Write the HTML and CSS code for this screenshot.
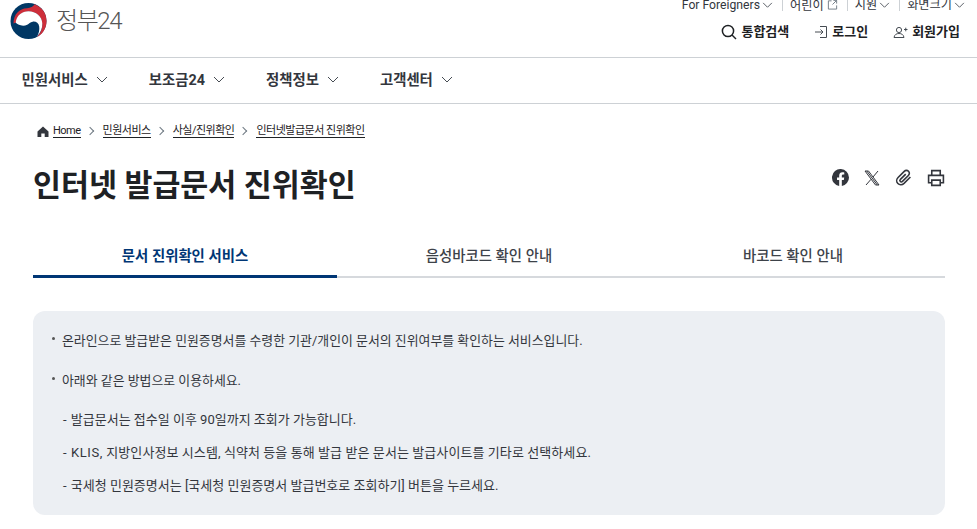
FILE: index.html
```html
<!DOCTYPE html>
<html lang="ko">

<head>
    <meta charset="UTF-8" />
    <meta name="viewport" content="width=device-width, initial-scale=1.0" />
    <title>인터넷 발급문서 진위확인</title>
    <link rel="stylesheet" href="styles.css">
</head>

<body>
    <header class="top-header">
        <a class="logo">
            <svg class="logo-mark" viewBox="0 0 38 36" width="38" height="36">
                <circle cx="18.500" cy="18" r="18" />
                <path class="logo-red" d="M3.500 20.500C3.500 11 9.500 5.500 17 5.200c3.500-.1 6.500-1.500 7.500-3.900C32 4 36.500 10.500 36.500 18c0 7-3.500 12.800-9.500 16 3.500-3.500 5.600-8.500 5.200-13.500C31.700 13 26 8.500 18.500 8.500c-6.500 0-11.500 4.500-12.500 11z" />
                <path class="logo-white" d="M5.700 19.500C6.500 12.500 12 8.300 18.500 8.300c7.500 0 13.500 5 13.800 12.200.2 4.500-1.700 9.300-5.300 13 1.800-3 2.700-6.500 2.200-10-.5-3.500-3.500-5.300-6.500-4.800-2.500.4-3.700 2.100-5.500 3-2 1-4.200 1.300-6.500.6-2.500-.7-4.500-1.900-5-2.800z" />
            </svg>
            <span class="logo-text">정부24</span>
        </a>
        <div class="header-right">
            <ul class="util-menu">
                <li>For Foreigners <svg class="chev" viewBox="0 0 12 8" width="11" height="7"><path d="M1 1l5 5 5-5" /></svg></li>
                <li>어린이 <svg class="ext" viewBox="0 0 12 12" width="11" height="11"><path d="M5 2H1.500v9h9V7M7 1.500h3.500V5M10.500 1.500L6 6" /></svg></li>
                <li>지원 <svg class="chev" viewBox="0 0 12 8" width="11" height="7"><path d="M1 1l5 5 5-5" /></svg></li>
                <li>화면크기 <svg class="chev" viewBox="0 0 12 8" width="11" height="7"><path d="M1 1l5 5 5-5" /></svg></li>
            </ul>
            <div class="user-menu">
                <a><svg viewBox="0 0 16 16" width="16" height="16"><circle cx="7" cy="7" r="5.600" /><path d="M11 11l4 4" /></svg>통합검색</a>
                <a><svg class="thin" viewBox="0 0 14 14" width="14" height="14"><path d="M6 1.500h6.500v11H6M1 7h8M6.500 4.500L9 7l-2.500 2.500" /></svg>로그인</a>
                <a><svg class="thin" viewBox="0 0 15 13" width="15" height="13"><circle cx="6" cy="4" r="2.600" /><path d="M1 11.500c.5-3 2.500-4 5-4s4.500 1 5 4zM11 3.500h3.500M12.750 1.700v3.600" /></svg>회원가입</a>
            </div>
        </div>
    </header>

    <nav class="main-nav">
        <a>민원서비스 <svg class="chev" viewBox="0 0 12 8" width="12" height="8"><path d="M1 1l5 5 5-5" /></svg></a>
        <a>보조금24 <svg class="chev" viewBox="0 0 12 8" width="12" height="8"><path d="M1 1l5 5 5-5" /></svg></a>
        <a>정책정보 <svg class="chev" viewBox="0 0 12 8" width="12" height="8"><path d="M1 1l5 5 5-5" /></svg></a>
        <a>고객센터 <svg class="chev" viewBox="0 0 12 8" width="12" height="8"><path d="M1 1l5 5 5-5" /></svg></a>
    </nav>

    <main class="content">
        <ol class="breadcrumb">
            <li>
                <svg class="home" viewBox="0 0 12 11" width="12" height="11"><path d="M6 .5L.5 5.500V11h3.800V7.500h3.400V11h3.800V5.500z" /></svg>
                <a>Home</a>
            </li>
            <li><a>민원서비스</a></li>
            <li><a>사실/진위확인</a></li>
            <li><a>인터넷발급문서 진위확인</a></li>
        </ol>

        <div class="title-row">
            <h1>인터넷 발급문서 진위확인</h1>
            <div class="share-icons">
                <svg viewBox="0 0 16 16" width="17" height="17"><path class="solid" d="M16 8a8 8 0 1 0-9.250 7.900v-5.600H4.700V8h2.050V6.240c0-2 1.200-3.120 3-3.120.9 0 1.800.16 1.800.16v2h-1c-1 0-1.300.62-1.300 1.250V8h2.240l-.36 2.300H9.250v5.600A8 8 0 0 0 16 8z" /></svg>
                <svg viewBox="0 0 16 16" width="16" height="16"><path class="line" d="M1 1h3.500l10.500 14h-3.500zM2.800 1l10.500 14M14 1L9 7M7 9.300L2 15" /></svg>
                <svg viewBox="0 0 16 16" width="17" height="17"><path class="line wide" d="M14.500 7.500l-6 6c-1.800 1.700-4.300 1.700-5.800.2-1.500-1.500-1.500-4 .2-5.700l5.800-5.800c1.200-1.200 2.900-1.200 4-.1 1.100 1.100 1.100 2.800-.1 4l-5.600 5.600c-.6.600-1.500.6-2 .1s-.5-1.400.1-2l5-5" /></svg>
                <svg viewBox="0 0 17 17" width="18" height="18"><path class="line wide" d="M4.500 6V1.500h8V6M4.500 13H1.500V6h14v7h-3M4.500 10.500h8v5h-8z" /></svg>
            </div>
        </div>

        <div class="tabs">
            <a class="tab active">문서 진위확인 서비스</a>
            <a class="tab">음성바코드 확인 안내</a>
            <a class="tab">바코드 확인 안내</a>
        </div>

        <section class="info-box">
            <p class="bullet">온라인으로 발급받은 민원증명서를 수령한 기관/개인이 문서의 진위여부를 확인하는 서비스입니다.</p>
            <p class="bullet">아래와 같은 방법으로 이용하세요.</p>
            <ul class="dash-list">
                <li>발급문서는 접수일 이후 90일까지 조회가 가능합니다.</li>
                <li class="spaced"><span class="latin">KLIS,</span> 지방인사정보 시스템, 식약처 등을 통해 발급 받은 문서는 발급사이트를 기타로 선택하세요.</li>
                <li>국세청 민원증명서는 [국세청 민원증명서 발급번호로 조회하기] 버튼을 누르세요.</li>
            </ul>
        </section>
    </main>
</body>

</html>
```

FILE: styles.css
```css
* {
    box-sizing: border-box;
}

body {
    margin: 0;
    font-family: Roboto, "Noto Sans CJK KR", sans-serif;
    color: #1e2124;
    background-color: white;
    overflow: hidden;
}

ul,
ol {
    list-style: none;
    margin: 0;
    padding: 0;
}

svg path,
svg circle {
    fill: none;
    stroke: currentColor;
}

.top-header {
    height: 58px;
    border-bottom: 1px solid #cdd1d5;
    display: flex;
    justify-content: space-between;
    padding: 0 17px 0 10px;
}

.logo {
    display: flex;
    align-items: flex-start;
    gap: 8px;
    padding-top: 3px;
}

.logo-mark circle {
    fill: #003764;
    stroke: none;
}

.logo-mark .logo-red {
    fill: #cd2e3a;
    stroke: none;
}

.logo-mark .logo-white {
    fill: #fff;
    stroke: none;
}

.logo-text {
    font-size: 24px;
    font-weight: 300;
    line-height: 36px;
    color: #555;
    letter-spacing: -1.400px;
}

.header-right {
    display: flex;
    flex-direction: column;
    align-items: flex-end;
}

.util-menu {
    display: flex;
    height: 12px;
    margin-top: -1px;
    margin-right: -5px;
    font-size: 12.200px;
    line-height: 12px;
    color: #33363d;
}

.util-menu li {
    padding: 0 9px 0 7px;
    border-left: 1px solid #cdd1d5;
    white-space: nowrap;
}

.util-menu li:first-child {
    border-left: none;
}

.util-menu li:last-child {
    padding-right: 0;
}

.util-menu .chev {
    margin-left: -1px;
}

.chev path {
    fill: none;
    stroke: #464c53;
    stroke-width: 1;
}

.ext path {
    stroke: #6d7882;
}

.user-menu {
    display: flex;
    gap: 25px;
    margin-top: 12px;
    font-size: 13px;
    font-weight: 700;
}

.user-menu a {
    display: flex;
    align-items: center;
    gap: 4px;
    line-height: 18px;
}

.user-menu svg {
    stroke-width: 1.500;
}

.user-menu svg.thin {
    color: #464c53;
    stroke-width: 1;
}

.main-nav {
    height: 46px;
    border-bottom: 1px solid #cdd1d5;
    display: flex;
    align-items: center;
    gap: 41px;
    padding: 0 0 5px 21.500px;
    font-size: 14.400px;
    font-weight: 700;
    color: #33363d;
}

.main-nav a {
    display: flex;
    align-items: center;
    gap: 4px;
}

.main-nav svg {
    margin: 3px 0 0 4px;
}

.content {
    padding: 0 32px 0 33px;
}

.breadcrumb {
    display: flex;
    align-items: center;
    height: 16px;
    margin-top: 19px;
    padding-left: 4px;
    font-size: 11px;
    color: #1e2124;
    letter-spacing: -.5px;
}

.breadcrumb li {
    display: flex;
    align-items: center;
    gap: 4px;
}

.breadcrumb li + li::before {
    content: "";
    width: 5px;
    height: 5px;
    margin: 0 6px;
    border-top: 1px solid #6d7882;
    border-right: 1px solid #6d7882;
    transform: rotate(45deg);
}

.breadcrumb a {
    border-bottom: 1px solid #1e2124;
    line-height: 13px;
}

.home path {
    fill: #33363d;
    stroke: none;
}

.title-row {
    display: flex;
    justify-content: space-between;
    margin-top: 24px;
}

h1 {
    margin: 0;
    font-size: 30.400px;
    font-weight: 700;
    line-height: 46px;
}

.share-icons {
    display: flex;
    align-items: center;
    gap: 15px;
    height: 17px;
    margin-top: 6px;
    color: #33363d;
}

.share-icons .solid {
    fill: #33363d;
    stroke: none;
}

.share-icons .line {
    stroke-width: 1;
}

.share-icons .line.wide {
    stroke-width: 1.500;
}

.tabs {
    display: flex;
    margin-top: 21px;
    border-bottom: 2px solid #d6d9dd;
    font-size: 14.400px;
    font-weight: 500;
    color: #3d4249;
}

.tab {
    flex: 1;
    height: 46px;
    padding-top: 5px;
    line-height: 44px;
    text-align: center;
}

.tab.active {
    margin-bottom: -2px;
    height: 48px;
    border-bottom: 3px solid #003675;
    color: #003675;
    font-weight: 700;
}

.info-box {
    margin-top: 33px;
    height: 204px;
    padding: 20px 18px 0 18px;
    border-radius: 12px;
    background-color: #eceff3;
    font-size: 13px;
    color: #33363d;
}

.info-box p {
    margin: 0 0 20px 0;
    font-size: 12.900px;
    line-height: 20px;
}

.bullet {
    position: relative;
    padding-left: 11px;
}

.bullet::before {
    content: "";
    position: absolute;
    left: 1px;
    top: 6px;
    width: 3px;
    height: 3px;
    background-color: #555;
    border-radius: 50%;
}

.dash-list {
    margin-top: -1px;
}

.dash-list li {
    padding-left: 12px;
    margin-bottom: 13px;
    line-height: 20px;
}

.dash-list li::before {
    content: "- ";
    margin-right: 1px;
}

.dash-list .spaced {
    letter-spacing: .08px;
}

.dash-list .latin {
    letter-spacing: .6px;
}
```
